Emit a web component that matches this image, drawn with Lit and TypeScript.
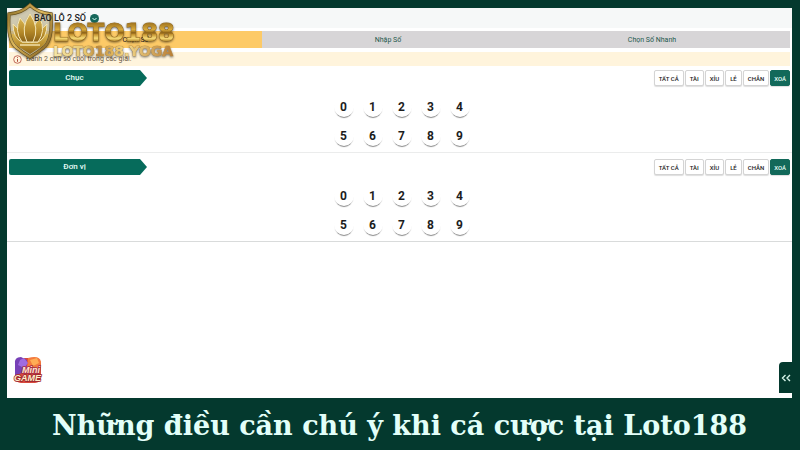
import { LitElement, html, svg, css } from "lit";
import { customElement, property } from "lit/decorators.js";

@customElement("digit-section")
class DigitSection extends LitElement {
  @property() label = "";

  static styles = css`
    :host { display: block; border-bottom: 1px solid #ebecec; }
    :host([last]) { border-bottom-color: #d9dbdb; }
    .head { display: flex; justify-content: space-between; align-items: center; padding: 0 2px; height: 16px; }
    .name {
      width: 138px; box-sizing: border-box; padding-right: 7px; margin: 0;
      font-size: 8px; line-height: 16px; font-weight: 500; text-align: center;
      color: #eafff9; background: #066b5b; border-radius: 2px 0 0 2px;
      clip-path: polygon(0 0, 131px 0, 100% 50%, 131px 100%, 0 100%);
    }
    .filters { display: flex; gap: 1px; }
    button { font-family: inherit; cursor: pointer; }
    .filter {
      height: 16px; padding: 0 4px; border: 1px solid #d4d4d4; border-radius: 2px; background: #fff;
      box-shadow: 0 1px 1px #0002; font-size: 6px; font-weight: 500; color: #222; white-space: nowrap;
    }
    .clear { padding: 0 3px; color: #e8fff9; background: #12695a; border-color: #12695a; }
    .digits {
      display: grid; grid-template-columns: repeat(5, 20px); gap: 9px; justify-content: center;
      padding: 11px 0 6px 4px;
    }
    .digit {
      width: 20px; height: 20px; padding: 0; border: 0; border-radius: 50%; background: #fff;
      box-shadow: 0 2px 1px -1px #0007; font-size: 12px; line-height: 16px; font-weight: 700; color: #1d1d1d;
    }
  `;

  render() {
    const filters = ["TẤT CẢ", "TÀI", "XỈU", "LẺ", "CHẴN"];
    return html`
      <div class="head">
        <h2 class="name">${this.label}</h2>
        <div class="filters">
          ${filters.map((f) => html`<button class="filter">${f}</button>`)}
          <button class="filter clear">XOÁ</button>
        </div>
      </div>
      <div class="digits">
        ${[0, 1, 2, 3, 4, 5, 6, 7, 8, 9].map((n) => html`<button class="digit">${n}</button>`)}
      </div>
    `;
  }
}

@customElement("app-root")
class AppRoot extends LitElement {
  static styles = css`
    :host {
      display: flex; flex-direction: column; min-height: 100vh; box-sizing: border-box; padding: 8px 8px 0 7px;
      background: #04392e; font-family: Roboto, "Noto Sans", sans-serif; position: relative;
    }
    .panel { flex: 1; background: #fff; position: relative; }
    .title { display: flex; align-items: center; gap: 4px; height: 20px; padding-left: 27px; background: #f6f8f8; }
    .title h1 { margin: 0; font-size: 9px; line-height: 20px; font-weight: 500; color: #222; position: relative; z-index: 2; }
    .expand { width: 9px; height: 9px; padding: 0; border: 0; background: none; display: flex; }
    .tabs { display: grid; grid-template-columns: 253fr 252fr 276fr; margin: 3px 2px 4px; }
    .tab {
      height: 17px; padding: 0; border: 0; background: #d7d5d7; color: #24594e;
      font-family: inherit; font-size: 7px;
    }
    .active { background: #fdca67; color: #222; }
    .notice {
      display: flex; align-items: center; gap: 4px; height: 14px; margin: 0 2px 4px; padding-left: 4px;
      background: #fff4dc; color: #6b5a45; font-size: 7px;
    }
    digit-section + digit-section { margin-top: 6px; }
    .caption {
      margin: 0; height: 52px; line-height: 56px; text-align: center; white-space: nowrap;
      font-family: "DejaVu Serif", serif; font-size: 27px; font-weight: 700; color: #e3fff9;
    }
    .logo { position: absolute; left: 5px; top: 2px; z-index: 1; filter: drop-shadow(0 1px 1px #0008); }
    .game { position: absolute; left: 6px; bottom: 13px; padding: 0; border: 0; background: none; display: flex; }
    .drawer {
      position: absolute; right: 0; bottom: 5px; width: 13px; height: 31px; padding: 0; border: 0;
      border-radius: 4px 0 0 0; background: #04392e; display: flex; align-items: center; justify-content: center;
    }
  `;

  logo() {
    return svg`<svg class="logo" width="175" height="60" viewBox="5 2 175 60">
      <defs>
        <linearGradient id="gold" gradientUnits="userSpaceOnUse" x1="0" y1="23" x2="0" y2="42">
          <stop offset="0" stop-color="#a0741f"/><stop offset=".35" stop-color="#d9ab3c"/>
          <stop offset=".52" stop-color="#8a5f17"/><stop offset=".6" stop-color="#c4922f"/>
          <stop offset=".8" stop-color="#f7dc78"/><stop offset="1" stop-color="#a87a22"/>
        </linearGradient>
        <linearGradient id="petal" x1="0" y1="0" x2="0" y2="1">
          <stop offset="0" stop-color="#d9b552"/><stop offset=".6" stop-color="#b48928"/><stop offset="1" stop-color="#8a6319"/>
        </linearGradient>
        <linearGradient id="rim" x1="0" y1="0" x2="1" y2="1">
          <stop offset="0" stop-color="#8a6d27"/><stop offset=".45" stop-color="#dfba5e"/><stop offset="1" stop-color="#765318"/>
        </linearGradient>
        <linearGradient id="sub" x1="0" y1="0" x2="1" y2="0">
          <stop offset="0" stop-color="#f6e7a8"/><stop offset=".28" stop-color="#e6c56d"/><stop offset=".36" stop-color="#b9853a"/>
          <stop offset=".5" stop-color="#e2b75c"/><stop offset=".6" stop-color="#f4d98a"/><stop offset="1" stop-color="#b87d35"/>
        </linearGradient>
      </defs>
      <path d="M30 5 Q38 13 51 14 Q53 41 43 48 Q37 53 30 57 Q23 53 17 48 Q7 41 9 14 Q22 13 30 5Z" fill="#e9dcae" fill-opacity=".55"/>
      <path d="M11 34 H49 Q47 43 41 47 L30 54 19 47 Q13 43 11 34Z" fill="url(#petal)"/>
      <path d="M30 5 Q38 13 51 14 Q53 41 43 48 Q37 53 30 57 Q23 53 17 48 Q7 41 9 14 Q22 13 30 5Z" fill="none" stroke="#66501d" stroke-width="3.4"/>
      <path d="M30 5 Q38 13 51 14 Q53 41 43 48 Q37 53 30 57 Q23 53 17 48 Q7 41 9 14 Q22 13 30 5Z" fill="none" stroke="url(#rim)" stroke-width="2.2"/>
      <g fill="url(#petal)" stroke="#f4e6b4" stroke-width="1">
        <path d="M13 24 Q13 38 22 42 H38 Q47 38 47 24 Q42 27 40 34 H20 Q18 27 13 24Z"/>
        <path d="M20 18 Q14 31 22 42 H29 Q29 27 20 18Z"/>
        <path d="M40 18 Q46 31 38 42 H31 Q31 27 40 18Z"/>
        <path d="M30 14 Q20 28 27 42 H33 Q40 28 30 14Z"/>
        <path d="M20 45 H40" stroke-width="1.4"/>
      </g>
      <g font-family="DejaVu Sans" font-weight="700" paint-order="stroke">
        <text x="53" y="41" font-size="24" fill="url(#gold)" stroke="#94691c" stroke-width="1">LOTO188</text>
        <text x="53" y="56" font-size="14" fill="url(#sub)" stroke="#b18a45" stroke-width=".6">LOTO188.YOGA</text>
      </g>
    </svg>`;
  }

  render() {
    return html`
      <main class="panel">
        <header class="title">
          <h1>BAO LÔ 2 SỐ</h1>
          <button class="expand" aria-label="Mở danh sách">
            <svg width="9" height="9" viewBox="0 0 9 9"><circle cx="4.5" cy="4.5" r="4.5" fill="#17685b"/><path d="M2.5 4 4.5 6 6.5 4" fill="none" stroke="#d7fff4"/></svg>
          </button>
        </header>
        <nav class="tabs">
          <button class="tab active">Chọn Số</button>
          <button class="tab">Nhập Số</button>
          <button class="tab">Chọn Số Nhanh</button>
        </nav>
        <div class="notice">
          <svg width="9" height="9" viewBox="0 0 9 9"><circle cx="4.5" cy="4.5" r="3.8" fill="none" stroke="#b34b3c" stroke-width=".8"/><path d="M4.5 4V6.8M4.5 2.2V3.1" stroke="#b34b3c"/></svg>
          <span>Đánh 2 chữ số cuối trong các giải.</span>
        </div>
        <digit-section label="Chục"></digit-section>
        <digit-section label="Đơn vị" last></digit-section>
        <button class="game" aria-label="Mini game">
          <svg width="30" height="30" viewBox="0 0 30 30">
            <rect x="2" y="3" width="26" height="25" rx="6" fill="#d84a3d"/>
            <path d="M2 9 Q1 2 8 2 L14 5 13 17 2 20Z" fill="#7741b7"/>
            <path d="M15 3 Q27 0 28 7 L27 15 14 14Z" fill="#f37a3d"/>
            <path d="M7 5 11 3 15 8 11 13 5 10Z" fill="#a06be0"/><path d="M17 5 24 3 26 8 20 11Z" fill="#ffad55"/>
            <g font-family="Liberation Sans" font-weight="700" font-style="italic" paint-order="stroke" stroke-width="1.5">
              <text x="9" y="18" font-size="9" fill="#ffe5cf" stroke="#a62d48">Mini</text>
              <text x="1" y="26" font-size="9" fill="#fff0c8" stroke="#9b2430">GAME</text>
            </g>
          </svg>
        </button>
        <button class="drawer" aria-label="Mở bảng bên">
          <svg width="10" height="8" viewBox="0 0 10 8"><path d="M4.5 1 1.5 4 4.5 7M9 1 6 4 9 7" fill="none" stroke="#d5f3e8" stroke-width="1.4"/></svg>
        </button>
      </main>
      <p class="caption">Những điều cần chú ý khi cá cược tại Loto188</p>
      ${this.logo()}
    `;
  }
}
